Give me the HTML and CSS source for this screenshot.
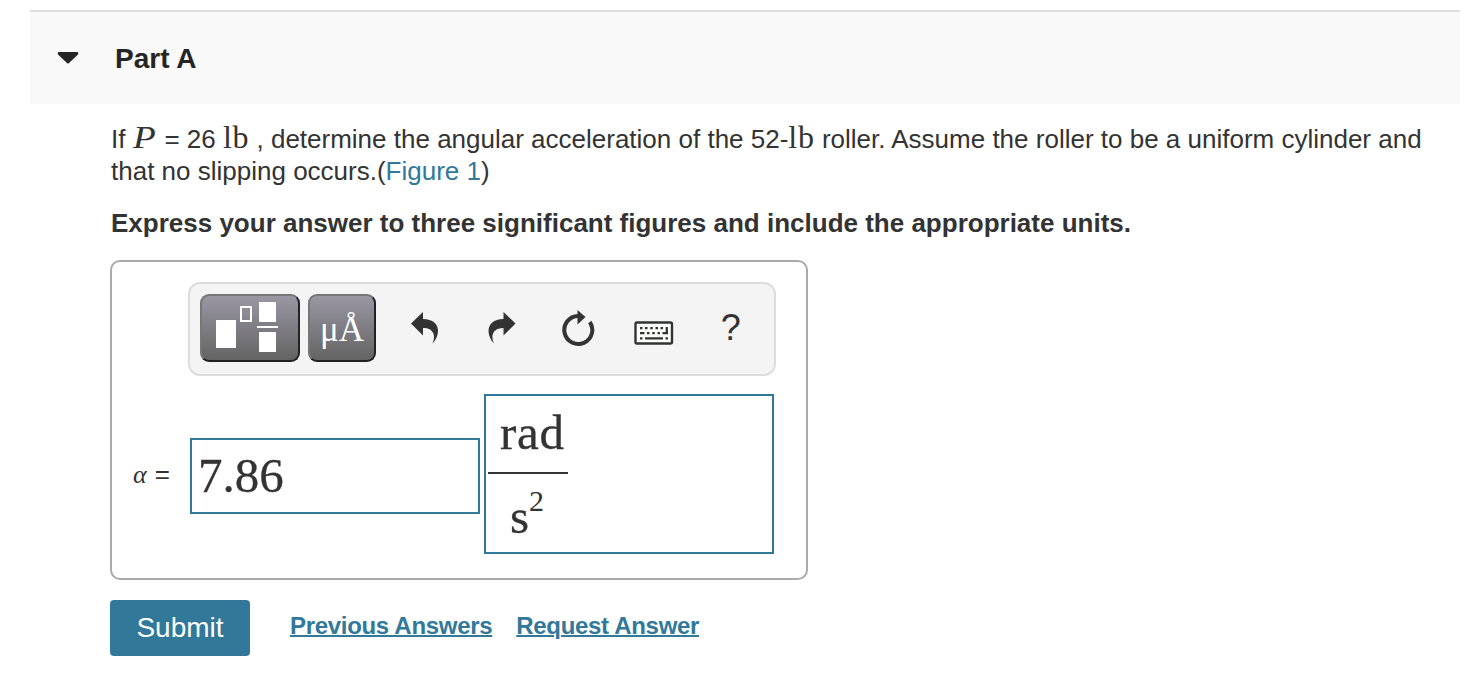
FILE: index.html
```html
<!DOCTYPE html>
<html lang="en">

<head>
    <meta charset="UTF-8">
    <meta name="viewport" content="width=device-width, initial-scale=1.0">
    <title>Part A</title>
    <link rel="stylesheet" href="styles.css">
</head>

<body>

    <div class="part-header">
        <svg class="arrow" width="22" height="12" viewBox="0 0 22 12">
            <path d="M1.500 0H20.500Q22 1 21 2.500L12 11Q11 12 10 11L1 2.500Q0 1 1.500 0Z" fill="#252525" />
        </svg>
        <h2>Part A</h2>
    </div>

    <div class="content">
        <p class="question">
            <span class="line">If <span class="math var">P</span> = 26 <span class="math">lb</span> , determine the angular acceleration of the 52-<span class="math">lb</span> roller. Assume the roller to be a uniform cylinder and</span>
            <span class="line">that no slipping occurs.(<a href="#">Figure 1</a>)</span>
        </p>
        <p class="instructions">Express your answer to three significant figures and include the appropriate units.</p>

        <div class="answer-box">
            <div class="toolbar">
                <button class="tool template">
                    <svg width="96" height="64" viewBox="0 0 96 64">
                        <g fill="#fff">
                            <rect x="14" y="24" width="20" height="28" />
                            <rect x="57" y="6" width="17" height="20" />
                            <rect x="55" y="30" width="21" height="2" />
                            <rect x="57" y="36" width="17" height="20" />
                        </g>
                        <rect x="39" y="11" width="10" height="14" fill="none" stroke="#fff" stroke-width="2" />
                    </svg>
                </button>
                <button class="tool units">μÅ</button>
                <div class="icons">
                    <button class="icon">
                        <svg width="28" height="34" viewBox="0 0 28 34">
                            <path d="M0 12.500L12 1V8C22 8 27 13 27 20C27 24 25 29 21.500 32.500C25 25 23 17 12 17V24.500Z" fill="#333" />
                        </svg>
                    </button>
                    <button class="icon">
                        <svg width="28" height="34" viewBox="0 0 28 34">
                            <path d="M27.500 12.500L15.500 1V8C5.500 8 0.500 13 0.500 20C0.500 24 2.500 29 6 32.500C2.500 25 4.500 17 15.500 17V24.500Z" fill="#333" />
                        </svg>
                    </button>
                    <button class="icon">
                        <svg width="34" height="38" viewBox="0 0 34 38">
                            <path d="M17 7A14 14 0 1 0 28.800 13" fill="none" stroke="#333" stroke-width="4" />
                            <path d="M16.500 1L24.500 8L16.500 15.500Z" fill="#333" />
                        </svg>
                    </button>
                    <button class="icon keyboard">
                        <svg width="40" height="24" viewBox="0 0 40 24">
                            <rect x="1.500" y="1.500" width="36.500" height="21" rx="1.500" fill="#fafffc" stroke="#333" stroke-width="2.400" />
                            <g stroke="#333" stroke-width="2.200" fill="none">
                                <path d="M6 7.200H8.500M11 7.200H13.500M16.300 7.200H18.800M21.500 7.200H24M26.500 7.200H29" />
                                <path d="M6 12.200H10.500M13 12.200H15.500M18.300 12.200H20.800M23.500 12.200H26M28.500 12.200H34" />
                                <path d="M6 17.300H8.500M11 17.300H29M31.500 17.300H34M32.800 6V13" />
                            </g>
                        </svg>
                    </button>
                    <button class="icon help">?</button>
                </div>
            </div>

            <div class="answer-row">
                <div class="label"><i>α</i><span class="equals">=</span></div>
                <div class="value">7.86</div>
                <div class="unit">
                    <div class="fraction">
                        <div class="top">rad</div>
                        <div class="bottom">s<sup>2</sup></div>
                    </div>
                </div>
            </div>
        </div>

        <div class="actions">
            <button class="submit">Submit</button>
            <a href="#">Previous Answers</a>
            <a href="#">Request Answer</a>
        </div>
    </div>

</body>

</html>
```

FILE: styles.css
```css
* {
    box-sizing: border-box;
}

body {
    margin: 0;
    padding: 10px 18px 0 30px;
    background-color: white;
    color: #333;
    font-family: "Liberation Sans", Arial, sans-serif;
    font-size: 26px;
}

button {
    padding: 0;
    border: none;
    background: none;
    font-family: inherit;
    color: inherit;
    cursor: pointer;
}

svg {
    display: block;
}

.part-header {
    display: flex;
    align-items: center;
    height: 94px;
    padding-left: 27px;
    border-top: 2px solid #ddd;
    background-color: #f9f9f9;
}

.part-header h2 {
    margin: 1px 0 0 36px;
    font-size: 28px;
    line-height: 32px;
    color: #252525;
}

.content {
    padding: 19px 0 0 80px;
}

.question,
.instructions {
    margin: 0;
    line-height: 32px;
}

.line {
    display: block;
    height: 32px;
    padding-left: 1px;
    white-space: nowrap;
}

.question a {
    color: #317899;
    text-decoration: none;
}

.math {
    font-family: "Liberation Serif", "Times New Roman", serif;
    font-size: 32px;
    line-height: 1px;
    letter-spacing: 0.7px;
}

.var {
    display: inline-block;
    width: 24.5px;
    font-style: italic;
    font-size: 31px;
    transform: scaleX(1.2);
    transform-origin: left;
}

.instructions {
    margin-top: 20px;
    padding-left: 1px;
    font-weight: bold;
    white-space: nowrap;
}

.answer-box {
    width: 698px;
    height: 320px;
    margin-top: 21px;
    padding-top: 20px;
    border: 2px solid #aaa;
    border-radius: 10px;
}

.toolbar {
    display: flex;
    gap: 8px;
    width: 588px;
    height: 94px;
    margin-left: 76px;
    padding: 10px;
    border: 2px solid #ddd;
    border-radius: 12px;
    background-color: #f4f4f4;
}

.tool {
    flex-shrink: 0;
    width: 100px;
    height: 68px;
    border: 2px solid;
    border-color: #777 #222 #222 #777;
    border-radius: 9px;
    background: linear-gradient(#9a97a3, #636363);
}

.units {
    width: 68px;
    padding-top: 4px;
    color: white;
    font-family: "Liberation Serif", "Times New Roman", serif;
    font-size: 35px;
}

.icons {
    display: flex;
    flex-shrink: 0;
    width: 383px;
    margin-left: 3px;
}

.icon {
    display: flex;
    flex: none;
    width: 76.4px;
    justify-content: center;
    align-items: center;
    height: 68px;
}

.keyboard {
    padding-top: 10px;
}

.help {
    font-size: 36px;
}

.answer-row {
    display: flex;
    align-items: center;
    height: 160px;
    margin-top: 18px;
    padding-left: 21px;
    font-family: "Liberation Serif", "Times New Roman", serif;
}

.label {
    width: 57px;
    font-size: 26px;
}

.equals {
    margin-left: 8px;
    font-family: "Liberation Sans", Arial, sans-serif;
}

.value {
    width: 290px;
    height: 76px;
    margin-top: 4px;
    padding-left: 6px;
    border: 2px solid #317899;
    font-size: 49px;
    line-height: 72px;
    -webkit-text-stroke: 0.3px #333;
}

.unit {
    width: 290px;
    height: 160px;
    margin-left: 4px;
    padding-left: 2px;
    border: 2px solid #317899;
    -webkit-text-stroke: 0.3px #333;
}

.fraction {
    width: 80px;
    font-size: 49px;
}

.top {
    height: 78px;
    padding-left: 12px;
    border-bottom: 2px solid #333;
    line-height: 73px;
    letter-spacing: 0.7px;
}

.bottom {
    padding-left: 22px;
    line-height: 86px;
}

.bottom sup {
    font-size: 30px;
    line-height: 1px;
    vertical-align: 22px;
    -webkit-text-stroke: 0;
}

.actions {
    display: flex;
    gap: 24px;
    margin-top: 20px;
}

.actions a {
    color: #317899;
    font-size: 24px;
    font-weight: bold;
    line-height: 52px;
    letter-spacing: -0.31px;
    text-decoration-thickness: 2px;
    white-space: nowrap;
}

.submit {
    width: 140px;
    height: 56px;
    margin-right: 16px;
    border-radius: 4px;
    background-color: #317899;
    color: white;
    font-size: 28px;
}
```
